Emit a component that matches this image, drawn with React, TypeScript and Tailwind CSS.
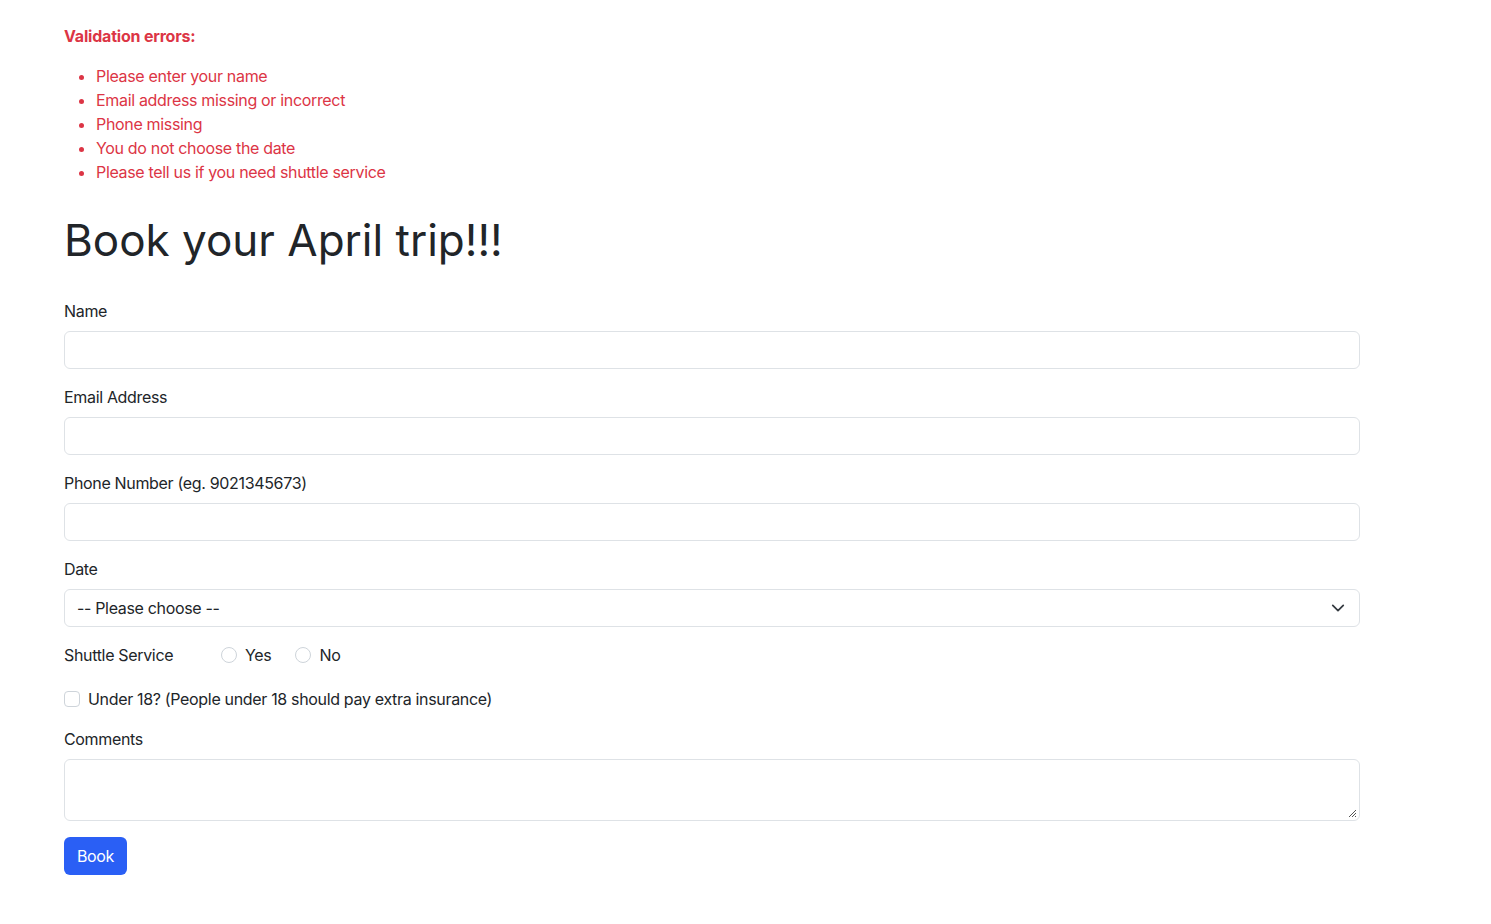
import React from "react";

export default function App() {
  return (
    <div className="min-h-screen bg-white text-[#212529] text-[16px] leading-[24px] tracking-[-0.33px] font-['Inter',sans-serif]">
      <div className="ml-[64px] w-[1296px] pt-6">
        <div className="font-bold text-[#dc3545] tracking-[-0.2px]">Validation errors:</div>
        <ul className="mt-4 list-disc pl-8 text-[#dc3545] marker:text-[#dc3545]">
          <li>Please enter your name</li>
          <li>Email address missing or incorrect</li>
          <li>Phone missing</li>
          <li>You do not choose the date</li>
          <li>Please tell us if you need shuttle service</li>
        </ul>
        <h1 className="mt-8 text-[44px] leading-[48px] font-normal tracking-[0px]">Book your April trip!!!</h1>
        <form className="mt-[35px]" onSubmit={(e) => e.preventDefault()}>
          <div className="mb-4">
            <label className="block mb-2">Name</label>
            <input className="block w-full h-[38px] rounded-[6px] border border-[#dee2e6] px-3 outline-none" />
          </div>
          <div className="mb-4">
            <label className="block mb-2">Email Address</label>
            <input className="block w-full h-[38px] rounded-[6px] border border-[#dee2e6] px-3 outline-none" />
          </div>
          <div className="mb-4">
            <label className="block mb-2">Phone Number (eg. 9021345673)</label>
            <input className="block w-full h-[38px] rounded-[6px] border border-[#dee2e6] px-3 outline-none" />
          </div>
          <div className="mb-4">
            <label className="block mb-2">Date</label>
            <div className="relative w-full h-[38px] rounded-[6px] border border-[#dee2e6] flex items-center pl-3">
              <span>-- Please choose --</span>
              <svg className="absolute right-[14px] top-[11px]" width="14" height="14" viewBox="0 0 16 16" fill="none">
                <path d="M2 5l6 6 6-6" stroke="#343a40" strokeWidth="2" strokeLinecap="round" strokeLinejoin="round" />
              </svg>
            </div>
          </div>
          <div className="flex items-center h-6">
            <span className="w-[157px]">Shuttle Service</span>
            <label className="flex items-center">
              <span className="w-4 h-4 rounded-full border border-[#ced4da] bg-white" />
              <span className="ml-2">Yes</span>
            </label>
            <label className="flex items-center ml-6">
              <span className="w-4 h-4 rounded-full border border-[#ced4da] bg-white" />
              <span className="ml-2">No</span>
            </label>
          </div>
          <div className="flex items-center h-6 mt-5">
            <span className="w-4 h-4 rounded-[4px] border border-[#ced4da] bg-white" />
            <span className="ml-2">Under 18? (People under 18 should pay extra insurance)</span>
          </div>
          <div className="mt-4 mb-4">
            <label className="block mb-2">Comments</label>
            <div className="relative w-full h-[62px] rounded-[6px] border border-[#dee2e6]">
              <svg className="absolute right-[2px] bottom-[2px]" width="9" height="9" viewBox="0 0 9 9">
                <path d="M8 1L1 8M8 4L4 8M8 7L7 8" stroke="#555" strokeWidth="1" />
              </svg>
            </div>
          </div>
          <button type="submit" className="h-[38px] w-[63px] rounded-[6px] bg-[#2a5ff5] text-white">Book</button>
        </form>
      </div>
    </div>
  );
}
